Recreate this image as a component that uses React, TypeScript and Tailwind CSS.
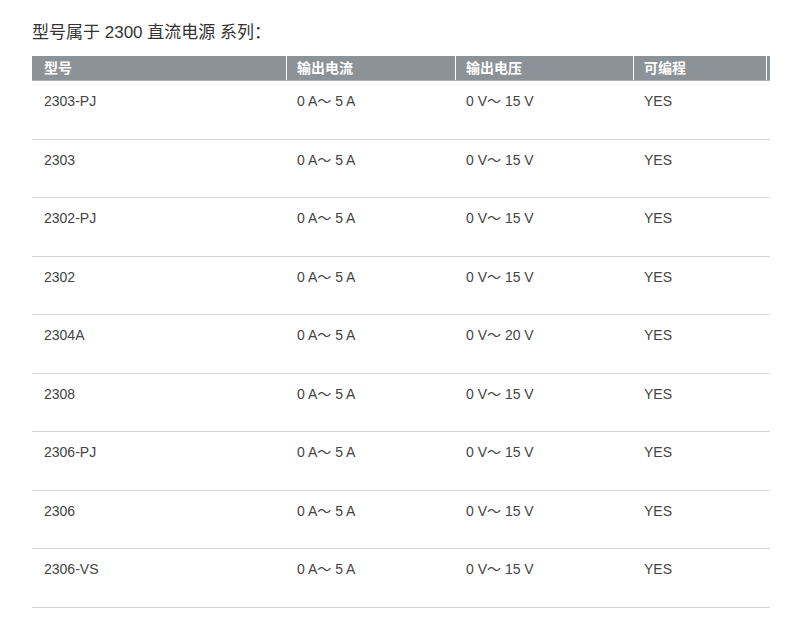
const rows = [
  ['2303-PJ', '0 A～ 5 A', '0 V～ 15 V', 'YES'],
  ['2303', '0 A～ 5 A', '0 V～ 15 V', 'YES'],
  ['2302-PJ', '0 A～ 5 A', '0 V～ 15 V', 'YES'],
  ['2302', '0 A～ 5 A', '0 V～ 15 V', 'YES'],
  ['2304A', '0 A～ 5 A', '0 V～ 20 V', 'YES'],
  ['2308', '0 A～ 5 A', '0 V～ 15 V', 'YES'],
  ['2306-PJ', '0 A～ 5 A', '0 V～ 15 V', 'YES'],
  ['2306', '0 A～ 5 A', '0 V～ 15 V', 'YES'],
  ['2306-VS', '0 A～ 5 A', '0 V～ 15 V', 'YES'],
];

const widths = ['w-[255px] pl-[12px]', 'w-[169px] pl-[10px]', 'w-[178px] pl-[10px]', 'w-[133px] pl-[10px]'];
const heads = ['型号', '输出电流', '输出电压', '可编程'];

export default function App() {
  return (
    <div className="w-[790px] h-[619px] bg-white pl-[32px] pt-[21px] font-['Liberation_Sans','Noto_Sans_CJK_SC',sans-serif]">
      <p className="text-[17px] leading-[24px] text-[#333]">型号属于 2300 直流电源 系列：</p>

      <div className="w-[738px] mt-[11px]">
        {/* header */}
        <div className="flex h-[25px] bg-[#8b9398] border-b border-[#aab0b4]">
          {heads.map((h, i) => (
            <div
              key={h}
              className={`${widths[i]} shrink-0 border-r border-white text-[14px] leading-[24px] font-bold text-white`}
            >
              {h}
            </div>
          ))}
          <div className="flex-1" />
        </div>

        {rows.map((r, ri) => (
          <div key={ri} className="flex h-[58.5px] border-b border-[#d3d3d3]">
            {r.map((c, i) => (
              <div
                key={i}
                className={`${widths[i]} shrink-0 pt-[11px] text-[14px] leading-[18px] text-[#444]`}
              >
                {c}
              </div>
            ))}
          </div>
        ))}
      </div>
    </div>
  );
}
